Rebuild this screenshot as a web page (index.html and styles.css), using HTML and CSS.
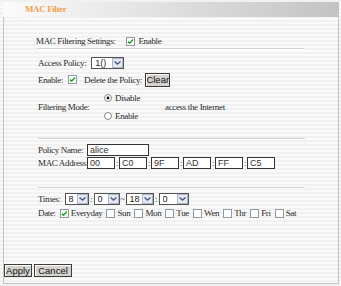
FILE: index.html
```html
<!DOCTYPE html>
<html>
<head>
  <meta charset="UTF-8">
  <title>MAC Filter</title>
  <link rel="stylesheet" href="styles.css">
</head>
<body>
<div class="panel">
  <div class="head">MAC Filter</div>
  <div class="body">

    <div class="row r-settings">
      <span>MAC Filtering Settings:</span>
      <span class="cb on"><svg viewBox="0 0 7 7"><path d="M1 3.6l1.6 1.6L6 1.6"/></svg></span>
      <span class="lbl">Enable</span>
    </div>
    <div class="sep"></div>

    <div class="row r-access">
      <span>Access Policy:</span>
      <span class="sel w33">
        <select><option>1()</option></select>
        <span class="arr"><svg viewBox="0 0 7 4"><path d="M.5 .5L3.5 3L6.5 .5"/></svg></span>
      </span>
    </div>

    <div class="row r-enable">
      <span>Enable:</span>
      <span class="cb on"><svg viewBox="0 0 7 7"><path d="M1 3.6l1.6 1.6L6 1.6"/></svg></span>
      <span class="del">Delete the Policy:</span>
      <button class="btn clear">Clear</button>
    </div>

    <div class="mode">
      <span class="mode-lbl">Filtering Mode:</span>
      <div class="radios">
        <div class="radio"><svg viewBox="0 0 8 8"><circle cx="4" cy="4" r="3.5" class="ring"/><circle cx="4" cy="4" r="1.4" class="dot"/></svg><span>Disable</span></div>
        <div class="radio"><svg viewBox="0 0 8 8"><circle cx="4" cy="4" r="3.5" class="ring"/></svg><span>Enable</span></div>
      </div>
      <span>access the Internet</span>
    </div>
    <div class="sep sep2"></div>

    <div class="row r-name">
      <span class="lab">Policy Name:</span>
      <input class="txt name" type="text" value="alice">
    </div>
    <div class="row r-mac">
      <span class="lab">MAC Address:</span>
      <input class="txt mac" type="text" value="00"><span class="colon">:</span>
      <input class="txt mac" type="text" value="C0"><span class="colon">:</span>
      <input class="txt mac" type="text" value="9F"><span class="colon">:</span>
      <input class="txt mac" type="text" value="AD"><span class="colon">:</span>
      <input class="txt mac" type="text" value="FF"><span class="colon">:</span>
      <input class="txt mac" type="text" value="C5">
    </div>
    <div class="sep sep3"></div>

    <div class="row r-times">
      <span>Times:</span>
      <span class="sel w24 first">
        <select><option>8</option></select>
        <span class="arr"><svg viewBox="0 0 7 4"><path d="M.5 .5L3.5 3L6.5 .5"/></svg></span>
      </span>
      <span class="colon">:</span>
      <span class="sel w26">
        <select><option>0</option></select>
        <span class="arr"><svg viewBox="0 0 7 4"><path d="M.5 .5L3.5 3L6.5 .5"/></svg></span>
      </span>
      <span class="tilde">~</span>
      <span class="sel w28">
        <select><option>18</option></select>
        <span class="arr"><svg viewBox="0 0 7 4"><path d="M.5 .5L3.5 3L6.5 .5"/></svg></span>
      </span>
      <span class="colon">:</span>
      <span class="sel w30">
        <select><option>0</option></select>
        <span class="arr"><svg viewBox="0 0 7 4"><path d="M.5 .5L3.5 3L6.5 .5"/></svg></span>
      </span>
    </div>

    <div class="row r-date">
      <span>Date:</span>
      <span class="day"><span class="cb on"><svg viewBox="0 0 7 7"><path d="M1 3.6l1.6 1.6L6 1.6"/></svg></span>Everyday</span>
      <span class="day"><span class="cb"></span>Sun</span>
      <span class="day"><span class="cb"></span>Mon</span>
      <span class="day"><span class="cb"></span>Tue</span>
      <span class="day"><span class="cb"></span>Wen</span>
      <span class="day"><span class="cb"></span>Thr</span>
      <span class="day"><span class="cb"></span>Fri</span>
      <span class="day"><span class="cb"></span>Sat</span>
    </div>

    <div class="actions">
      <button class="btn apply">Apply</button>
      <button class="btn cancel">Cancel</button>
    </div>

  </div>
</div>
</body>
</html>
```

FILE: styles.css
```css
*{
  margin:0;
  padding:0;
  box-sizing:border-box;
}
body{
  width:341px;
  height:286px;
  overflow:hidden;
  background:repeating-linear-gradient(#f1f1f1 0 2px,#fafafa 2px 4px);
  font:9px/12px "Liberation Serif",serif;
  letter-spacing:-0.35px;
  color:#2a2a2a;
}
.panel{
  margin:2px 2px 0 3px;
  height:282px;
  border:1px solid #c4c4c4;
  border-top:0;
  display:flex;
  flex-direction:column;
}
.head{
  height:15px;
  margin:0 -1px;
  padding-left:22px;
  background:linear-gradient(90deg,#fbfbfb,#c3c3c3);
  color:#f3a04b;
  font-weight:bold;
  line-height:15px;
  letter-spacing:-0.4px;
}
.body{
  flex:1;
  display:flex;
  flex-direction:column;
  padding-left:34px;
}
.row{
  display:flex;
  align-items:center;
  height:12px;
  white-space:nowrap;
}
.sep{
  width:267px;
  height:2px;
  margin-top:1px;
  border-top:1px solid #d2d2d2;
  border-bottom:1px solid #fff;
}
.sep2{ margin-top:16px; }
.sep3{ margin-top:18px; }

/* checkbox / radio */
.cb{
  display:inline-flex;
  align-items:center;
  justify-content:center;
  width:9px;
  height:9px;
  border:1px solid #8d9aa7;
  background:#fff;
  flex:none;
}
.cb svg{
  width:7px;
  height:7px;
  fill:none;
  stroke:#21a021;
  stroke-width:1.5;
}
.radio{
  display:flex;
  align-items:center;
  height:12px;
}
.radio svg{
  width:8px;
  height:8px;
  margin-right:3px;
}
.radio .ring{ fill:#fff; stroke:#8a8a8a; }
.radio .dot{ fill:#111; }

/* rows */
.r-settings{ margin:18px 0 0 -2px; }
.r-settings .cb{ margin-left:11px; }
.r-settings .lbl{ margin-left:3px; }

.r-access{ margin-top:7px; }
.r-access .sel{ margin-left:5px; }

.r-enable{ margin-top:3px; height:15px; }
.r-enable .cb{ margin-left:5px; }
.del{ margin-left:7px; }
.clear{ margin-left:3px; width:25px; height:14px; }

.mode{
  display:flex;
  align-items:center;
  height:30px;
  margin-top:5px;
}
.mode-lbl{ width:66px; }
.radios{
  display:flex;
  flex-direction:column;
  gap:6px;
  width:61px;
}

.r-name{ margin-top:4px; }
.r-mac{ margin-top:1px; }
.lab{ width:49px; }

.r-times{ margin-top:4px; }
.r-times .first{ margin-left:4px; }
.colon{ width:5px; text-align:center; }
.tilde{ width:6px; text-align:center; }
.r-mac .colon{ width:4px; }

.r-date{ margin-top:3px; height:10px; }
.day{
  display:flex;
  align-items:center;
  margin-left:4px;
}
.r-date .day:first-of-type{ margin-left:3px; }
.day .cb{ margin-right:2px; }

/* inputs */
.txt{
  height:12px;
  border:1px solid #333;
  background:#fff;
  padding:0 2px;
  font:9px/10px "Liberation Sans",sans-serif;
  color:#333;
  outline:none;
}
.name{ width:62px; }
.mac{ width:28px; }

.sel{
  display:inline-flex;
  height:12px;
  border:1px solid #555;
  background:#fff;
  flex:none;
}
.sel select{
  appearance:none;
  -webkit-appearance:none;
  flex:1;
  min-width:0;
  height:10px;
  border:0;
  background:transparent;
  padding:0 0 0 3px;
  font:9px/10px "Liberation Sans",sans-serif;
  color:#222;
  outline:none;
}
.arr{
  display:flex;
  align-items:center;
  justify-content:center;
  width:11px;
  height:10px;
  border:1px solid #aeb7c9;
  background:#e4e9f3;
}
.arr svg{
  width:7px;
  height:4px;
  fill:none;
  stroke:#4a5d82;
  stroke-width:1.4;
}
.w24{ width:24px; }
.w26{ width:26px; }
.w28{ width:28px; }
.w30{ width:30px; }
.w33{ width:33px; }

/* buttons */
.btn{
  background:#d6d3ce;
  border:1px solid #3c3c3c;
  box-shadow:inset 1px 1px #fff;
  font:9.5px "Liberation Sans",sans-serif;
  letter-spacing:0;
  color:#111;
}
.actions{
  display:flex;
  gap:2px;
  margin:46px 0 0 -34px;
}
.apply{ width:28px; height:13px; }
.cancel{ width:38px; height:13px; }
```
